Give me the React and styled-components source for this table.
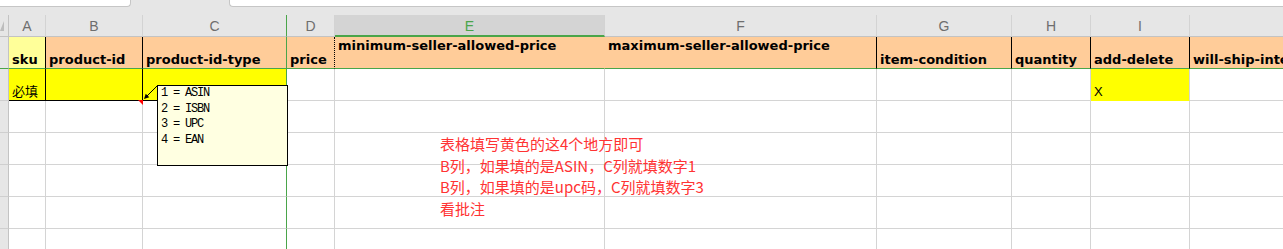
import React from 'react';
import styled, { createGlobalStyle } from 'styled-components';

const GREEN = '#4aa54a';
const PEACH = '#ffcc99';
const PALE_YELLOW = '#ffff99';
const YELLOW = '#ffff00';
const GRID = '1px solid #d4d4d4';
const BLACK = '1px solid #000';
const FREEZE = `1px solid ${GREEN}`;

const GlobalStyle = createGlobalStyle`
  body {
    margin: 0;
    background: #fff;
    overflow: hidden;
  }
`;

const Window = styled.div`
  position: relative;
  width: 1283px;
  height: 249px;
  overflow: hidden;
  background: #fff;
`;

const FormulaStrip = styled.div`
  display: flex;
  align-items: flex-start;
  height: 15px;
  background: #e6e6e6;
`;

const NameBox = styled.div`
  box-sizing: border-box;
  width: 131px;
  height: 7px;
  background: #fff;
  border-right: 1px solid #c6c6c6;
  border-bottom: 1px solid #c6c6c6;
  border-bottom-right-radius: 4px;
`;

const FormulaInput = styled.div`
  box-sizing: border-box;
  flex: 1;
  margin-left: 98px;
  height: 7px;
  background: #fff;
  border-left: 1px solid #c6c6c6;
  border-bottom: 1px solid #c6c6c6;
  border-bottom-left-radius: 4px;
`;

const Sheet = styled.div`
  display: grid;
  grid-template-columns: 9px 37px 97px 144px 48px 270px 272px 135px 79px 99px 300px;
  grid-template-rows: 22px;
  grid-auto-rows: 32px;
`;

const Corner = styled.div`
  position: relative;
  box-sizing: border-box;
  background: #e6e6e6;
  border-right: 1px solid #c3c3c3;
  border-bottom: 1px solid #c3c3c3;

  &::after {
    content: '';
    position: absolute;
    left: 0;
    bottom: 5px;
    border-left: 4px solid transparent;
    border-bottom: 10px solid #bdbdbd;
  }
`;

const ColHead = styled.div`
  box-sizing: border-box;
  display: flex;
  align-items: center;
  justify-content: center;
  padding-top: 1px;
  background: ${({ $active }) => ($active ? '#d4d4d4' : '#e6e6e6')};
  border-right: ${({ $freeze }) => ($freeze ? FREEZE : '1px solid #d3d3d3')};
  border-bottom: ${({ $active }) => ($active ? `2px solid ${GREEN}` : '1px solid #c3c3c3')};
  color: ${({ $active }) => ($active ? GREEN : '#6e6e6e')};
  font: 14px "Liberation Sans", Arial, sans-serif;
`;

const RowHead = styled.div`
  box-sizing: border-box;
  background: #e6e6e6;
  border-right: 1px solid #c3c3c3;
  border-bottom: ${({ $freeze }) => ($freeze ? FREEZE : '1px solid #cfcfcf')};
`;

const Cell = styled.div`
  box-sizing: border-box;
  display: flex;
  align-items: ${({ $top }) => ($top ? 'flex-start' : 'flex-end')};
  padding: ${({ $top }) => ($top ? '1px 3px 0' : '0 3px 1px')};
  background: ${({ $bg }) => $bg || '#fff'};
  border-right: ${({ $r }) => $r || GRID};
  border-bottom: ${({ $b }) => $b || GRID};
  white-space: nowrap;
  font-family: ${({ $bold }) =>
    $bold ? '"DejaVu Sans", sans-serif' : '"Liberation Sans", "Noto Sans CJK SC", sans-serif'};
  font-weight: ${({ $bold }) => ($bold ? 700 : 400)};
  font-size: 13px;
  line-height: 15px;
  color: #000;
`;

const Comment = styled.div`
  position: absolute;
  left: 157px;
  top: 85px;
  width: 131px;
  height: 81px;
  box-sizing: border-box;
  padding-left: 3px;
  background: #ffffe1;
  border: 1px solid #000;
  font: 12px/15.5px "Liberation Mono", monospace;
  letter-spacing: -1.2px;
  color: #000;
  white-space: pre;
`;

const Pointer = styled.svg`
  position: absolute;
  left: 0;
  top: 0;
  overflow: visible;
  pointer-events: none;
`;

const Note = styled.div`
  position: absolute;
  left: 440px;
  top: 133px;
  font: 15px/21.5px "Noto Sans CJK SC", sans-serif;
  color: #ff3333;
  white-space: nowrap;
`;

const COLS = [
  { id: 'A' },
  { id: 'B' },
  { id: 'C', freeze: true },
  { id: 'D' },
  { id: 'E', active: true },
  { id: 'F' },
  { id: 'G' },
  { id: 'H' },
  { id: 'I' },
  { id: 'J' },
];

const FIELDS = [
  { text: 'sku', bg: PALE_YELLOW, r: BLACK },
  { text: 'product-id', r: BLACK },
  { text: 'product-id-type', r: FREEZE },
  { text: 'price', r: '1px dotted #000' },
  { text: 'minimum-seller-allowed-price', top: true, r: `1px solid ${PEACH}` },
  { text: 'maximum-seller-allowed-price', top: true, r: BLACK },
  { text: 'item-condition', r: BLACK },
  { text: 'quantity', r: BLACK },
  { text: 'add-delete', r: BLACK },
  { text: 'will-ship-internationally', r: BLACK },
];

const REQUIRED = [
  { text: '必填', bg: YELLOW, r: BLACK, b: BLACK },
  { bg: YELLOW, r: BLACK, b: BLACK },
  { bg: YELLOW, r: FREEZE, b: BLACK },
  {},
  {},
  {},
  {},
  {},
  { text: 'X', bg: YELLOW, b: `1px solid ${YELLOW}` },
  {},
];

const blankRow = COLS.map((c) => (c.freeze ? { r: FREEZE } : {}));

const ID_TYPES = ['1 = ASIN', '2 = ISBN', '3 = UPC', '4 = EAN'];

const NOTES = [
  '表格填写黄色的这4个地方即可',
  'B列，如果填的是ASIN，C列就填数字1',
  'B列，如果填的是upc码，C列就填数字3',
  '看批注',
];

export default function App() {
  const rows = [REQUIRED, blankRow, blankRow, blankRow, blankRow, blankRow];

  return (
    <Window>
      <GlobalStyle />
      <FormulaStrip>
        <NameBox />
        <FormulaInput />
      </FormulaStrip>

      <Sheet>
        <Corner />
        {COLS.map((c) => (
          <ColHead key={c.id} $active={c.active} $freeze={c.freeze}>
            {c.id}
          </ColHead>
        ))}

        <RowHead $freeze />
        {FIELDS.map((f, i) => (
          <Cell key={i} $bold $bg={f.bg || PEACH} $r={f.r} $b={FREEZE} $top={f.top}>
            {f.text}
          </Cell>
        ))}

        {rows.map((row, ri) => (
          <React.Fragment key={ri}>
            <RowHead />
            {row.map((c, ci) => (
              <Cell key={ci} $bg={c.bg} $r={c.r} $b={c.b}>
                {c.text}
              </Cell>
            ))}
          </React.Fragment>
        ))}
      </Sheet>

      <Pointer width="1283" height="249">
        <polygon points="138,100 143,100 143,105" fill="#ff0000" />
        <line x1="157" y1="86" x2="146.5" y2="96.5" stroke="#000" strokeWidth="1" />
        <polygon points="144,99 149.3,97.3 145.7,93.7" fill="#000" />
      </Pointer>

      <Comment>{ID_TYPES.join('\n')}</Comment>

      <Note>
        {NOTES.map((line) => (
          <div key={line}>{line}</div>
        ))}
      </Note>
    </Window>
  );
}
